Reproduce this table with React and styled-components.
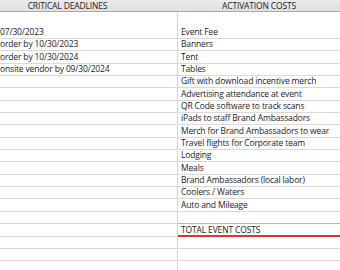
import React from "react";
import styled, { createGlobalStyle } from "styled-components";

const Global = createGlobalStyle`
  html, body { margin: 0; padding: 0; background: #fff; }
  body { font-family: "Open Sans", "Liberation Sans", sans-serif; }
`;

const Sheet = styled.div`
  width: 340px;
  height: 270px;
  overflow: hidden;
  display: flex;
  flex-direction: column;
  font-size: 8.5px;
  letter-spacing: -0.15px;
  color: #1c1c1c;
`;

const HeaderRow = styled.div`
  display: grid;
  grid-template-columns: 178px 1fr;
  height: 12px;
  box-sizing: border-box;
  background: linear-gradient(#ebebeb, #e0e0e0);
  border-bottom: 1px solid #a9a9a9;
`;

const HeaderCell = styled.div`
  display: flex;
  align-items: center;
  justify-content: center;
  padding-right: ${(p) => p.$padRight || 0}px;
  line-height: 11px;
  white-space: nowrap;
  color: #222;
`;

const Row = styled.div`
  display: grid;
  grid-template-columns: 178px 1fr;
  height: ${(p) => p.$h || 12.35}px;
  flex-shrink: 0;
`;

const Cell = styled.div`
  box-sizing: border-box;
  display: flex;
  align-items: flex-end;
  padding: 0 0 ${(p) => (p.$line === "strong" ? 0 : 1)}px ${(p) => p.$pad || 0}px;
  white-space: nowrap;
  overflow: hidden;
  line-height: ${(p) => (p.$line === "strong" ? 10 : 11)}px;
  border-bottom: ${(p) =>
    p.$line === "light"
      ? "1px solid #eaa0a0"
      : p.$line === "strong"
      ? "2px solid #d23a3a"
      : "1px solid #dadada"};
  border-right: ${(p) => (p.$divider ? "1px solid #d6d6d6" : "none")};
`;

const deadlines = [
  "07/30/2023",
  "order by 10/30/2023",
  "order by 10/30/2024",
  "onsite vendor by 09/30/2024",
];

const costs = [
  "Event Fee",
  "Banners",
  "Tent",
  "Tables",
  "Gift with download incentive merch",
  "Advertising attendance at event",
  "QR Code software to track scans",
  "iPads to staff Brand Ambassadors",
  "Merch for Brand Ambassadors to wear",
  "Travel flights for Corporate team",
  "Lodging",
  "Meals",
  "Brand Ambassadors (local labor)",
  "Coolers / Waters",
  "Auto and Mileage",
  "",
  "TOTAL EVENT COSTS",
  "",
  "",
  "",
];

export default function App() {
  return (
    <>
      <Global />
      <Sheet>
        <HeaderRow>
          <HeaderCell $padRight={43}>CRITICAL DEADLINES</HeaderCell>
          <HeaderCell>ACTIVATION COSTS</HeaderCell>
        </HeaderRow>
        {costs.map((c, i) => (
          <Row key={i} $h={i === 0 ? 27 : undefined}>
            <Cell $divider>{deadlines[i] || ""}</Cell>
            <Cell
              $pad={3}
              $line={i === 15 ? "light" : i === 16 ? "strong" : undefined}
            >
              {c}
            </Cell>
          </Row>
        ))}
      </Sheet>
    </>
  );
}
